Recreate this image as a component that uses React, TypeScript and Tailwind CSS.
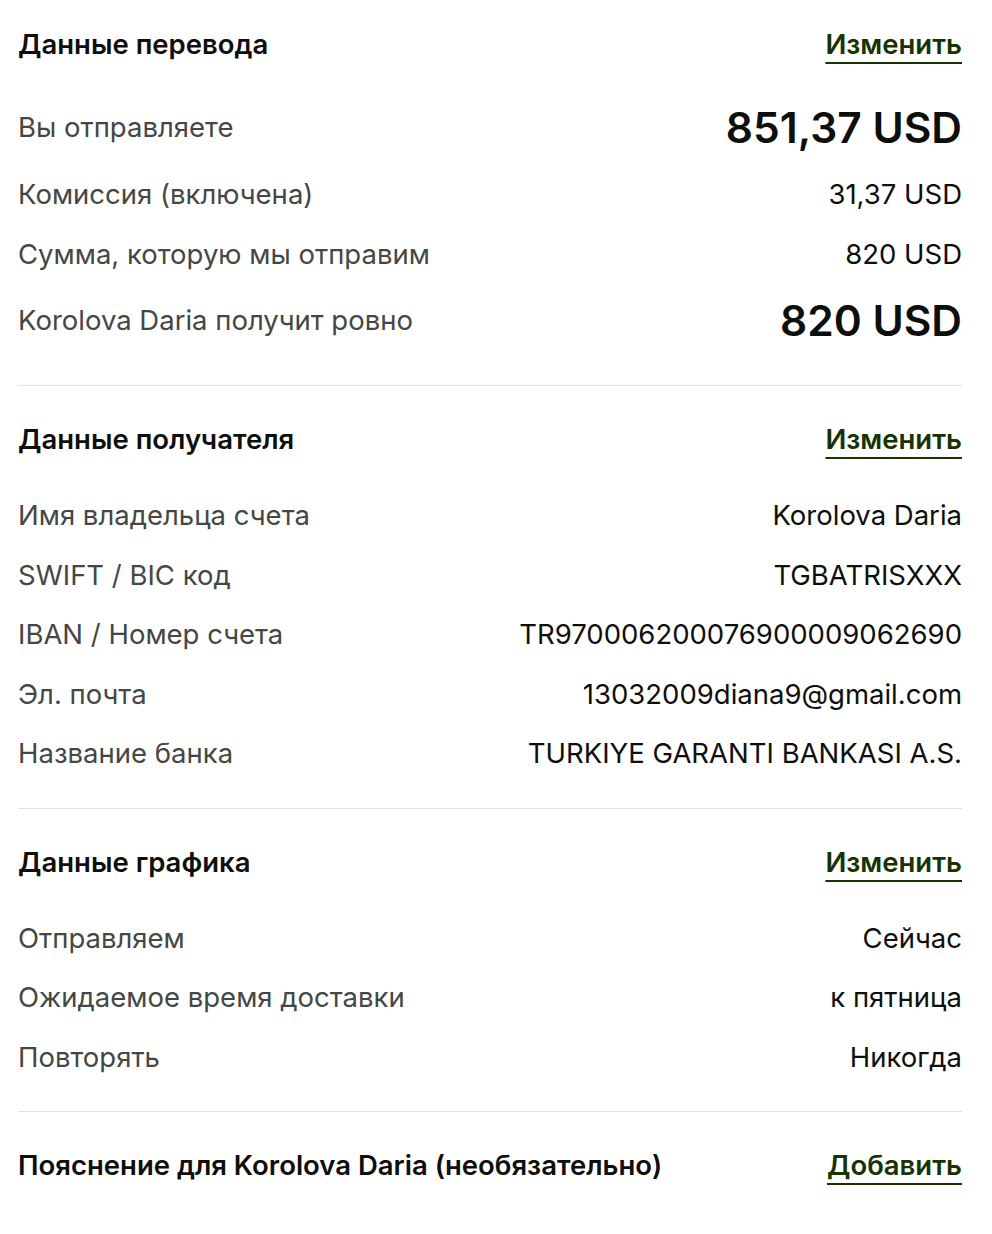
type Row = { label: string; value: string; big?: boolean };

const sections: { title: string; action: string; rows: Row[] }[] = [
  {
    title: 'Данные перевода',
    action: 'Изменить',
    rows: [
      { label: 'Вы отправляете', value: '851,37 USD', big: true },
      { label: 'Комиссия (включена)', value: '31,37 USD' },
      { label: 'Сумма, которую мы отправим', value: '820 USD' },
      { label: 'Korolova Daria получит ровно', value: '820 USD', big: true },
    ],
  },
  {
    title: 'Данные получателя',
    action: 'Изменить',
    rows: [
      { label: 'Имя владельца счета', value: 'Korolova Daria' },
      { label: 'SWIFT / BIC код', value: 'TGBATRISXXX' },
      { label: 'IBAN / Номер счета', value: 'TR970006200076900009062690' },
      { label: 'Эл. почта', value: '13032009diana9@gmail.com' },
      { label: 'Название банка', value: 'TURKIYE GARANTI BANKASI A.S.' },
    ],
  },
  {
    title: 'Данные графика',
    action: 'Изменить',
    rows: [
      { label: 'Отправляем', value: 'Сейчас' },
      { label: 'Ожидаемое время доставки', value: 'к пятница' },
      { label: 'Повторять', value: 'Никогда' },
    ],
  },
  {
    title: 'Пояснение для Korolova Daria (необязательно)',
    action: 'Добавить',
    rows: [],
  },
];

function SectionHeader({ title, action }: { title: string; action: string }) {
  return (
    <div className="flex h-[50px] items-center justify-between">
      <h3 className="text-[27.5px] font-semibold text-[#0e0f0c]">{title}</h3>
      <a
        href="#"
        className="text-[27.5px] font-semibold text-[#163300] underline decoration-2 underline-offset-[8px]"
      >
        {action}
      </a>
    </div>
  );
}

export default function App() {
  return (
    <div
      className="min-h-screen bg-white pl-[18px] pr-[30px] pt-[20px] pb-10"
      style={{ fontFamily: 'Inter, "Noto Sans", sans-serif' }}
    >
      {sections.map((s, i) => (
        <section key={s.title}>
          {i > 0 && (
            <div className={`${i === 1 ? 'mt-[27px]' : 'mt-[24px]'} mb-[29px] h-px bg-[#e2e2e2]`} />
          )}
          <SectionHeader title={s.title} action={s.action} />
          {s.rows.length > 0 && (
            <div className="mt-[21px]">
              {s.rows.map((r) => (
                <div
                  key={r.label}
                  className={`flex items-center justify-between ${r.big ? 'h-[74px]' : 'h-[59.5px]'}`}
                >
                  <span className="text-[27.5px] text-[#454745]">{r.label}</span>
                  <span
                    className={
                      r.big
                        ? 'text-[42.5px] font-semibold text-[#0e0f0c]'
                        : 'text-[27.5px] text-[#0e0f0c]'
                    }
                  >
                    {r.value}
                  </span>
                </div>
              ))}
            </div>
          )}
        </section>
      ))}
    </div>
  );
}
